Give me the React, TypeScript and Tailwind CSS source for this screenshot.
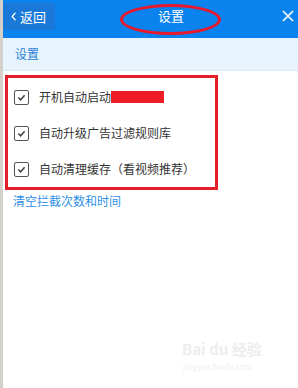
import React from "react";

function Check() {
  return (
    <span className="flex h-[15px] w-[15px] shrink-0 items-center justify-center rounded-[2px] border border-[#555] bg-white">
      <svg viewBox="0 0 10 10" className="h-[9px] w-[9px]">
        <path d="M1.5,5 L4,7.5 L8.5,2.5" fill="none" stroke="#444" strokeWidth="1.8" />
      </svg>
    </span>
  );
}

const rows = ["开机自动启动", "自动升级广告过滤规则库", "自动清理缓存（看视频推荐）"];

export default function App() {
  return (
    <div
      className="flex h-[388px] w-[298px] overflow-hidden bg-white"
      style={{ fontFamily: '"Noto Sans CJK SC", "Liberation Sans", sans-serif' }}
    >
      {/* left window edge */}
      <div className="w-[3px] shrink-0 bg-[#d4d1cb]" />

      <div className="relative flex flex-1 flex-col">
        {/* header */}
        <div className="relative flex h-[38px] shrink-0 items-start bg-[#0b83ee] text-white">
          <div className="mt-[3px] flex h-[27px] w-[52px] items-center gap-[3px] bg-[#1a78d8] pl-[8px] text-[13px]">
            <svg viewBox="0 0 8 12" className="h-[11px] w-[6px]">
              <path d="M6,1 L1.5,6 L6,11" fill="none" stroke="white" strokeWidth="1.6" />
            </svg>
            <span>返回</span>
          </div>
          <div className="absolute left-[155px] top-[6px] text-[13px]">设置</div>
          <div className="absolute left-[117px] top-[4px] h-[31px] w-[101px] rounded-[50%] border-[3px] border-[#e8192c]" />
          <svg viewBox="0 0 12 12" className="absolute left-[279px] top-[10px] h-[12px] w-[12px]">
            <path d="M1,1 L11,11 M11,1 L1,11" stroke="white" strokeWidth="1.6" />
          </svg>
        </div>

        {/* sub bar */}
        <div className="flex h-[33px] shrink-0 items-center border-b border-dotted border-[#cfe3f5] bg-[#e7f4fd] pl-[12px] text-[12px] text-[#2a7fd4]">
          设置
        </div>

        {/* options */}
        <div className="ml-[2px] mt-[4px] w-[213px] shrink-0 border-[3px] border-[#e41e2b] pl-[6px] pt-[1px]">
          {rows.map((t, i) => (
            <div key={t} className="flex h-[36px] items-center gap-[10px] text-[12px] text-[#333]">
              <Check />
              <span className="flex items-center">
                {t}
                {i === 0 && <span className="inline-block h-[12px] w-[53px] bg-[#ee1c25]" />}
              </span>
            </div>
          ))}
        </div>

        <div className="mt-[2px] pl-[10px] text-[12px] text-[#2f8fe6]">清空拦截次数和时间</div>

        {/* watermark */}
        <div className="absolute left-[179px] top-[338px] text-[15px] font-bold text-[#ededed]">Bai du 经验</div>
        <div className="absolute left-[180px] top-[361px] text-[8px] text-[#efefef]">jingyan.baidu.com</div>
      </div>
    </div>
  );
}
